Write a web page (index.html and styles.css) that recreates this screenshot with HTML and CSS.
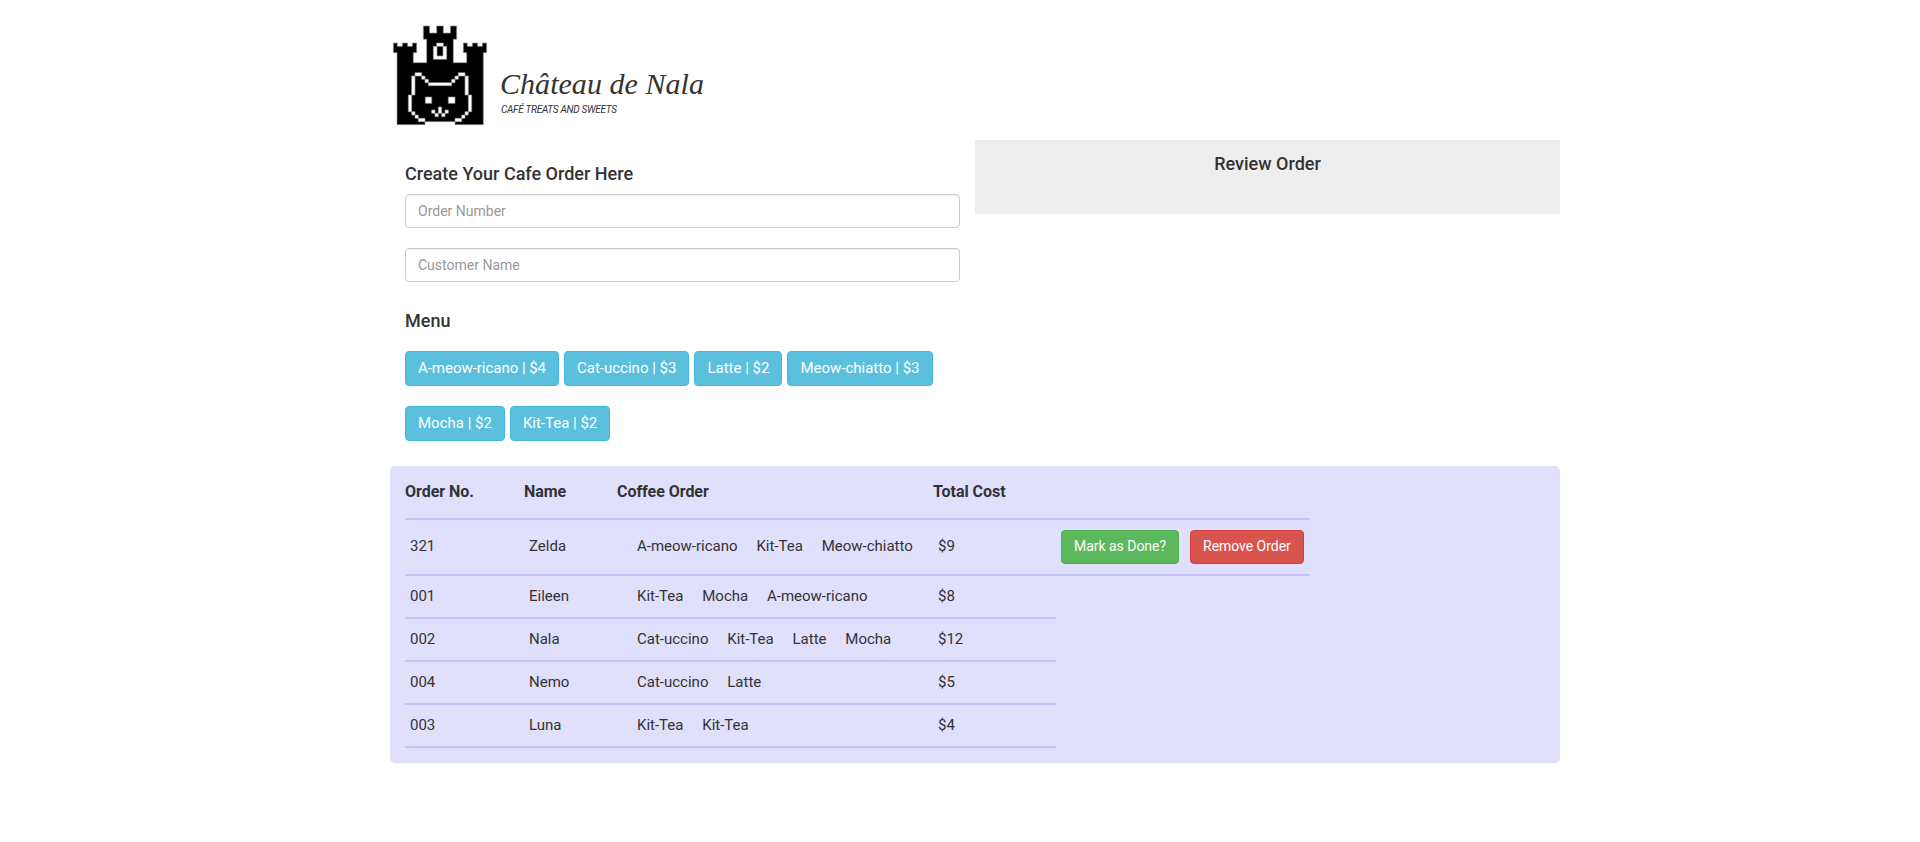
FILE: index.html
```html
<!DOCTYPE html>
<html lang="en">
<head>
<meta charset="utf-8">
<title>Château de Nala</title>
<link rel="stylesheet" href="styles.css">
</head>
<body>
<div class="container">
  <header class="brand">
    <svg class="logo" viewBox="0 0 330 330" role="img" aria-label="Castle and cat logo">
      <path class="ink" d="M36 314V98H25V69H37V79H52V69H68V79H82V69H95V98H85V128H125V58H115V18H134V39H155V18H175V39H196V18H215V58H205V128H245V98H235V69H247V79H262V69H278V79H292V69H305V98H295V314H210V305H120V314Z"/>
      <path class="paper" d="M155 69H175V79H185V118H145V79H155Z"/>
      <path class="hole" d="M156 79H174V108H156Z"/>
      <path class="paper" d="M90 158H110V168H120V178H130V188H200V178H210V168H220V158H240V168H250V225H260V275H250V285H240V295H230V305H210V295H230V285H240V275H250V225H240V168H220V178H210V188H200V197H130V188H120V178H110V168H90V225H80V275H90V285H100V295H120V305H100V295H90V285H80V275H70V225H80V168H90Z"/>
      <path class="paper" d="M121 231H140V250H121ZM190 231H210V250H190ZM160 261H170V280H180V270H190V280H180V290H170V280H160V290H150V280H140V270H150V280H160Z"/>
    </svg>
    <div>
      <h1 class="brand-name">Château de Nala</h1>
      <p class="tagline">CAFÉ TREATS AND SWEETS</p>
    </div>
  </header>
  <main>
    <div class="columns">
      <section class="create">
        <h4 class="heading">Create Your Cafe Order Here</h4>
        <input class="field" type="text" placeholder="Order Number">
        <input class="field" type="text" placeholder="Customer Name">
        <h4 class="heading menu-heading">Menu</h4>
        <div class="menu">
          <button class="btn item">A-meow-ricano | $4</button>
          <button class="btn item">Cat-uccino | $3</button>
          <button class="btn item">Latte | $2</button>
          <button class="btn item">Meow-chiatto | $3</button>
          <button class="btn item">Mocha | $2</button>
          <button class="btn item">Kit-Tea | $2</button>
        </div>
      </section>
      <section class="review">
        <h4 class="heading">Review Order</h4>
      </section>
    </div>
    <section class="orders">
      <div class="row head">
        <span>Order No.</span><span>Name</span><span>Coffee Order</span><span>Total Cost</span>
      </div>
      <div class="row open">
        <span>321</span><span>Zelda</span><span class="coffees"><i>A-meow-ricano</i><i>Kit-Tea</i><i>Meow-chiatto</i></span><span>$9</span>
        <span class="actions"><button class="btn done">Mark as Done?</button><button class="btn remove">Remove Order</button></span>
      </div>
      <div class="row">
        <span>001</span><span>Eileen</span><span class="coffees"><i>Kit-Tea</i><i>Mocha</i><i>A-meow-ricano</i></span><span>$8</span>
      </div>
      <div class="row">
        <span>002</span><span>Nala</span><span class="coffees"><i>Cat-uccino</i><i>Kit-Tea</i><i>Latte</i><i>Mocha</i></span><span>$12</span>
      </div>
      <div class="row">
        <span>004</span><span>Nemo</span><span class="coffees"><i>Cat-uccino</i><i>Latte</i></span><span>$5</span>
      </div>
      <div class="row">
        <span>003</span><span>Luna</span><span class="coffees"><i>Kit-Tea</i><i>Kit-Tea</i></span><span>$4</span>
      </div>
    </section>
  </main>
</div>
</body>
</html>
```
FILE: styles.css
```css
* { box-sizing: border-box; }
body {
  margin: 0;
  background: #fff;
  color: #333;
  font-family: Roboto, "Liberation Sans", sans-serif;
  font-size: 15px;
  line-height: 20px;
}
.container { width: 1170px; margin-left: 390px; padding-top: 20px; }
.brand { display: flex; height: 120px; }
.logo { width: 110px; height: 110px; margin-left: -5px; flex: none; }
.ink { fill: #000; stroke: #999; stroke-width: 2; }
.paper { fill: #fff; stroke: #999; stroke-width: 2; }
.hole { fill: #000; stroke: #999; stroke-width: 2; }
.brand-name {
  margin: 47px 0 0 5px;
  font: italic 400 30px/33px "Liberation Serif", serif;
  letter-spacing: .04px;
}
.tagline { margin: 4px 0 0 6px; font-size: 10px; line-height: 12px; font-style: italic; letter-spacing: -.27px; }
.columns { display: flex; align-items: flex-start; height: 326px; }
.create { width: 585px; padding: 24px 15px 0; }
.review { width: 585px; height: 74px; padding-top: 14px; background: #eee; text-align: center; }
.heading { margin: 0; font-size: 18px; line-height: 20px; font-weight: 500; }
.field {
  display: block;
  width: 100%;
  height: 34px;
  margin: 10px 0 20px;
  padding: 6px 12px;
  border: 1px solid #ccc;
  border-radius: 4px;
  box-shadow: inset 0 1px 1px rgba(0, 0, 0, .075);
  font: 14px/20px Roboto, sans-serif;
}
.field::placeholder { color: #999; }
.menu-heading { padding-top: 9px; }
.menu { display: flex; flex-wrap: wrap; gap: 20px 5px; margin-top: 20px; }
.btn {
  height: 34px;
  padding: 0 12px 2px;
  border: 1px solid;
  border-radius: 4px;
  color: #fff;
  font: 14px/20px Roboto, sans-serif;
  letter-spacing: -.03px;
  white-space: nowrap;
}
.item { height: 35px; background: #5bc0de; border-color: #46b8da; font-size: 15px; letter-spacing: 0; }
.item:first-child { letter-spacing: -.03px; }
.done { background: #5cb85c; border-color: #4cae4c; }
.remove { background: #d9534f; border-color: #d43f3a; }
.orders { height: 297px; padding: 0 15px; background: #e0dffc; border-radius: 5px; }
.row {
  display: grid;
  grid-template-columns: 119px 93px 316px 123px 254px;
  align-items: center;
  width: 651px;
  height: 43px;
  padding-bottom: 2px;
  border-bottom: 2px solid #c5c4f9;
}
.row > span { padding-left: 5px; }
.row.head { width: 905px; height: 54px; padding-bottom: 0; font-size: 16px; font-weight: 700; letter-spacing: -.04px; }
.row.head > span { padding-left: 0; }
.row.open { width: 905px; height: 56px; padding-bottom: 0; }
.row.open > span:not(.actions) { padding-bottom: 2px; }
.row > .coffees { display: flex; gap: 18.8px; padding-left: 20px; }
.coffees i { font-style: normal; }
.actions { display: flex; gap: 11px; }
```
